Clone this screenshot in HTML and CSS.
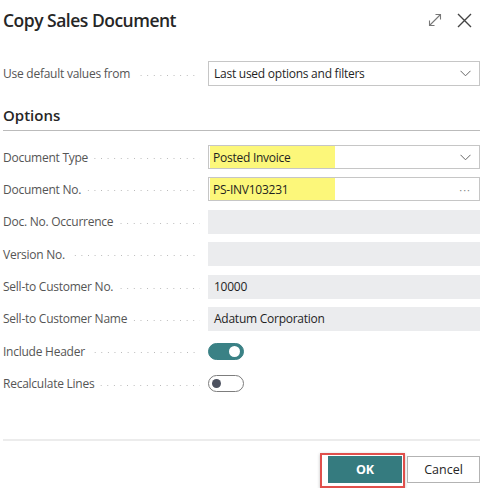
FILE: index.html
```html
<!doctype html>
<html lang="en">
<head>
    <meta charset="UTF-8">
    <title>Copy Sales Document</title>
    <link rel="stylesheet" href="styles.css">
</head>
<body>
<div class="dialog">
    <div class="head">
        <h1>Copy Sales Document</h1>
        <div class="tools">
            <svg class="ico" width="14" height="14" viewBox="0 0 14 14">
                <path d="M1.5 12.5 L12.5 1.5 M7.5 1.5 H12.5 V6.5 M1.5 7.5 V12.5 H6.5" fill="none" stroke="#777" stroke-width="1.1"/>
            </svg>
            <svg class="ico" width="15" height="15" viewBox="0 0 15 15">
                <path d="M1 1 L14 14 M14 1 L1 14" fill="none" stroke="#444" stroke-width="1.4"/>
            </svg>
        </div>
    </div>

    <div class="row top">
        <label><span class="txt">Use default values from</span><span class="dots"></span></label>
        <div class="field">
            <span>Last used options and filters</span>
            <svg class="chev" width="11" height="7" viewBox="0 0 11 7"><path d="M0.5 0.8 L5.5 5.8 L10.5 0.8" fill="none" stroke="#666" stroke-width="1"/></svg>
        </div>
    </div>

    <h2>Options</h2>

    <div class="rows">
        <div class="row">
            <label><span class="txt">Document Type</span><span class="dots"></span></label>
            <div class="field">
                <span class="mark">Posted Invoice</span>
                <svg class="chev" width="11" height="7" viewBox="0 0 11 7"><path d="M0.5 0.8 L5.5 5.8 L10.5 0.8" fill="none" stroke="#666" stroke-width="1"/></svg>
            </div>
        </div>
        <div class="row">
            <label><span class="txt">Document No.</span><span class="dots"></span></label>
            <div class="field">
                <span class="mark">PS-INV103231</span>
                <span class="more">···</span>
            </div>
        </div>
        <div class="row">
            <label><span class="txt">Doc. No. Occurrence</span><span class="dots"></span></label>
            <div class="field ro"></div>
        </div>
        <div class="row">
            <label><span class="txt">Version No.</span><span class="dots"></span></label>
            <div class="field ro"></div>
        </div>
        <div class="row">
            <label><span class="txt">Sell-to Customer No.</span><span class="dots"></span></label>
            <div class="field ro"><span>10000</span></div>
        </div>
        <div class="row">
            <label><span class="txt">Sell-to Customer Name</span><span class="dots"></span></label>
            <div class="field ro"><span>Adatum Corporation</span></div>
        </div>
        <div class="row">
            <label><span class="txt">Include Header</span><span class="dots"></span></label>
            <div class="switch on"><i></i></div>
        </div>
        <div class="row">
            <label><span class="txt">Recalculate Lines</span><span class="dots"></span></label>
            <div class="switch"><i></i></div>
        </div>
    </div>

    <div class="foot">
        <span class="focus"><button class="btn ok">OK</button></span>
        <button class="btn">Cancel</button>
    </div>
</div>
</body>
</html>
```

FILE: styles.css
```css
body{
    margin:0;
    background-color:#fff;
    font-family:"Open Sans","Noto Sans",sans-serif;
    color:#212121;
}

.dialog{
    width:477px;
    padding:0 9px 0 3px;
}

.head{
    display:flex;
    align-items:center;
    justify-content:space-between;
    height:40px;
}
h1{
    margin:0;
    font-size:17.5px;
    font-weight:600;
    letter-spacing:-0.5px;
    color:#262626;
}
.tools{
    display:flex;
    align-items:center;
    gap:15px;
    padding-right:8px;
}
.ico{
    display:block;
}

.row{
    display:flex;
    align-items:center;
    height:24px;
}
.row.top{
    margin-top:21px;
    height:25px;
}
label{
    display:flex;
    align-items:center;
    width:205px;
    font-size:12px;
    letter-spacing:-0.25px;
    color:#555;
}
.txt{
    white-space:nowrap;
}
.dots{
    flex:1;
    height:1px;
    margin:3px 8px 0 6px;
    background-image:linear-gradient(to right,#b8b8b8 1px,transparent 1px);
    background-size:6.6px 1px;
    background-repeat:repeat-x;
    background-position:right top;
}
.field{
    flex:1;
    height:100%;
    box-sizing:border-box;
    border:1px solid #c6c6c6;
    display:flex;
    align-items:center;
    justify-content:space-between;
    padding:0 8px 0 4px;
    font-size:12px;
    letter-spacing:-0.25px;
    color:#1f1f1f;
}
.field.ro{
    border-color:#ebecee;
    background-color:#ebecee;
}
.field span{
    padding-left:1px;
}
.field .mark{
    align-self:stretch;
    display:flex;
    align-items:center;
    width:122px;
    margin-left:-3px;
    padding-left:3px;
    background-color:#fcf77a;
}
.chev{
    display:block;
}
.more{
    color:#888;
    letter-spacing:1px;
    font-size:11px;
}

h2{
    margin:19px 0 0;
    padding-bottom:5px;
    border-bottom:1px solid #bbb;
    font-size:15px;
    font-weight:600;
    color:#262626;
}

.rows{
    display:flex;
    flex-direction:column;
    gap:8.4px;
    margin-top:14px;
}

.switch{
    position:relative;
    width:36px;
    height:17px;
    box-sizing:border-box;
    border-radius:9px;
    border:1px solid #7d7d7d;
    background-color:#fff;
}
.switch i{
    position:absolute;
    left:3px;
    top:3px;
    width:9px;
    height:9px;
    border-radius:50%;
    background-color:#4d5260;
}
.switch.on{
    border-color:#3a8185;
    background-color:#3a8185;
}
.switch.on i{
    left:auto;
    right:3px;
    top:2px;
    width:11px;
    height:11px;
    background-color:#fff;
}

.foot{
    margin-top:43px;
    border-top:2px solid #ececec;
    padding-top:12px;
    display:flex;
    justify-content:flex-end;
    align-items:flex-start;
    gap:2px;
}
.focus{
    display:block;
    border:2px solid #e0504c;
    padding:1px 1px 3px 6px;
    box-shadow:0 1px 3px rgba(0,0,0,.25);
}
.btn{
    display:block;
    width:73px;
    height:27px;
    box-sizing:border-box;
    border:1px solid #b3b3b3;
    background-color:#fff;
    font-family:inherit;
    font-size:12.5px;
    color:#262626;
    margin-top:3px;
}
.btn.ok{
    margin-top:0;
    width:74px;
    border-color:#357b7f;
    background-color:#357b7f;
    color:#fff;
    font-weight:700;
}
```
